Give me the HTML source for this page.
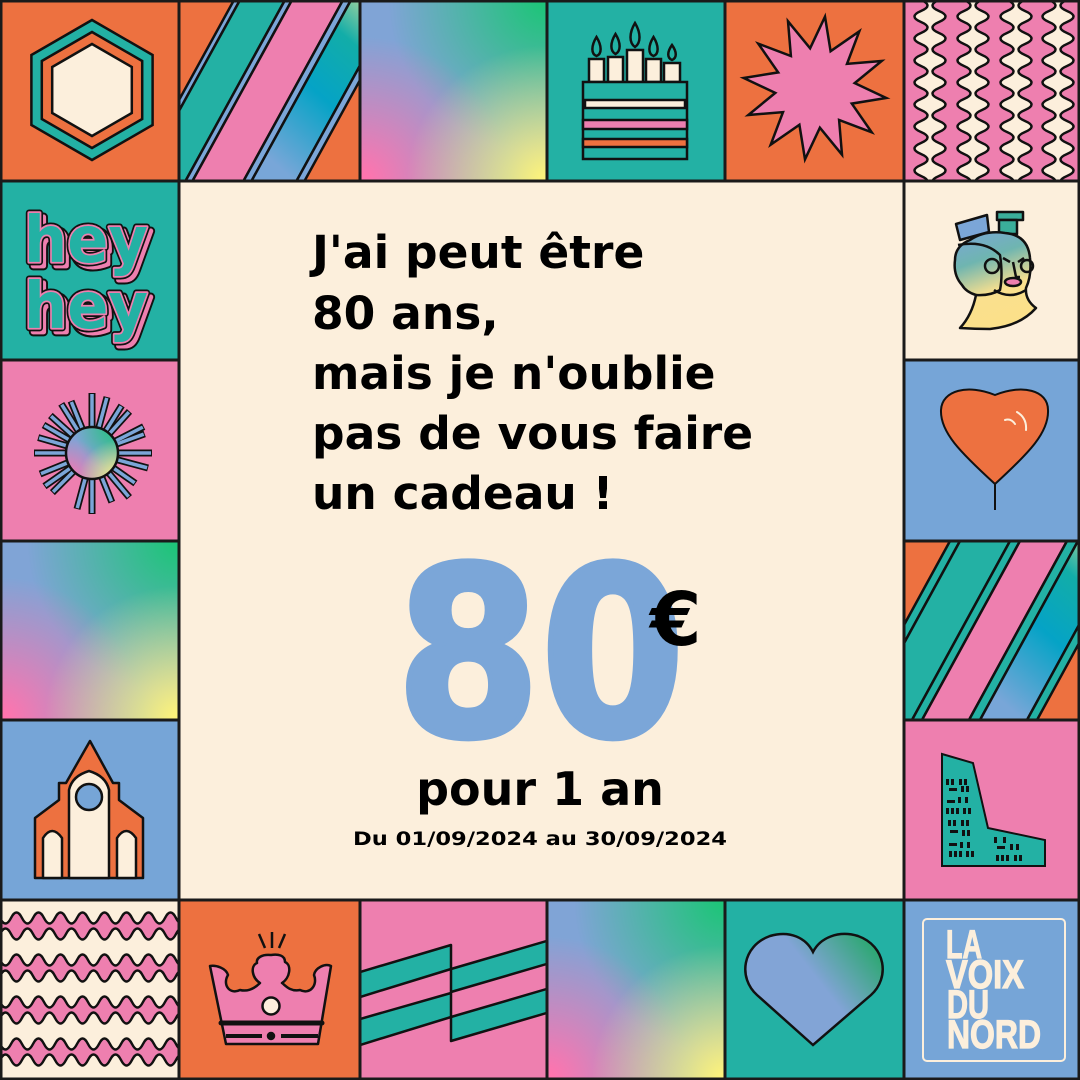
<!DOCTYPE html>
<html><head><meta charset="utf-8"><style>
html,body{margin:0;padding:0;background:#FCEFDC}
svg{display:block}
</style></head><body>
<svg width="1080" height="1080" viewBox="0 0 1080 1080" xmlns="http://www.w3.org/2000/svg">
<defs>
<radialGradient id="gG" cx="1" cy="0" r="0.85"><stop offset="0.05" stop-color="#1FC47A"/><stop offset="1" stop-color="#1FC47A" stop-opacity="0"/></radialGradient>
<radialGradient id="gP" cx="0" cy="1" r="0.8"><stop offset="0.05" stop-color="#FF74AE"/><stop offset="1" stop-color="#FF74AE" stop-opacity="0"/></radialGradient>
<radialGradient id="gY" cx="1" cy="1" r="0.75"><stop offset="0.05" stop-color="#FBF27C"/><stop offset="1" stop-color="#FBF27C" stop-opacity="0"/></radialGradient>
<linearGradient id="band" x1="1" y1="0" x2="0.3" y2="1"><stop offset="0" stop-color="#E8E49A"/><stop offset="0.3" stop-color="#12ADA8"/><stop offset="0.6" stop-color="#05A3C6"/><stop offset="1" stop-color="#78A6D8"/></linearGradient>
<linearGradient id="faceG" x1="0" y1="0" x2="0.3" y2="1"><stop offset="0" stop-color="#7BA6D8"/><stop offset="0.35" stop-color="#6FB5B0"/><stop offset="0.7" stop-color="#FAE08E"/><stop offset="1" stop-color="#FBE08A"/></linearGradient>
<linearGradient id="heartG" x1="0.2" y1="0.6" x2="1" y2="0.1"><stop offset="0.4" stop-color="#82A4D6"/><stop offset="1" stop-color="#22A866"/></linearGradient>
<clipPath id="c2"><rect x="179" y="0" width="181" height="181"/></clipPath>
<clipPath id="cR"><rect x="904" y="541" width="176" height="179"/></clipPath>
<clipPath id="cW"><rect x="904" y="0" width="176" height="181"/></clipPath>
<clipPath id="cB"><rect x="0" y="900" width="179" height="180"/></clipPath>
<clipPath id="cS"><rect x="360" y="900" width="187" height="180"/></clipPath>
</defs>

<rect x="0" y="0" width="1080" height="1080" fill="#FCEFDC"/>

<!-- tile 1 hexagon -->
<rect x="0" y="0" width="179" height="181" fill="#ED7140"/>
<polygon points="92,20 152.6,55 152.6,125 92,160 31.4,125 31.4,55" fill="#23B1A4" stroke="#111" stroke-width="2.5"/>
<polygon points="92,32 142.2,61 142.2,119 92,148 41.8,119 41.8,61" fill="#ED7140" stroke="#111" stroke-width="2.5"/>
<polygon points="92,44 131.8,67 131.8,113 92,136 52.2,113 52.2,67" fill="#FCEFDC" stroke="#111" stroke-width="2.5"/>

<!-- tile 2 stripes -->
<g clip-path="url(#c2)" stroke="#111" stroke-width="2.5">
<rect x="179" y="0" width="181" height="181" fill="#ED7140" stroke="none"/>
<polygon points="234,0 240,0 140.5,181 134.5,181" fill="#7BA6D8"/>
<polygon points="240,0 285,0 185.5,181 140.5,181" fill="#23B1A4"/>
<polygon points="285,0 292,0 192.5,181 185.5,181" fill="#7BA6D8"/>
<polygon points="292,0 343,0 243.5,181 192.5,181" fill="#EE7FAF"/>
<polygon points="343,0 351,0 251.5,181 243.5,181" fill="#7BA6D8"/>
<polygon points="351,0 396,0 296.5,181 251.5,181" fill="url(#band)"/>
<polygon points="396,0 404,0 304.5,181 296.5,181" fill="#7BA6D8"/>
</g>

<!-- tile 3 gradient -->
<g><rect x="360" y="0" width="187" height="181" fill="#80A4D6"/><rect x="360" y="0" width="187" height="181" fill="url(#gG)"/><rect x="360" y="0" width="187" height="181" fill="url(#gP)"/><rect x="360" y="0" width="187" height="181" fill="url(#gY)"/></g>

<!-- tile 4 cake -->
<rect x="547" y="0" width="178" height="181" fill="#23B1A4"/>
<g stroke="#111" stroke-width="2.5">
<rect x="589" y="59" width="15" height="23" fill="#FCEFDC"/>
<rect x="608" y="57" width="15" height="25" fill="#FCEFDC"/>
<rect x="627" y="50" width="16" height="32" fill="#FCEFDC"/>
<rect x="646" y="59" width="15" height="23" fill="#FCEFDC"/>
<rect x="664" y="63" width="16" height="19" fill="#FCEFDC"/>
<path d="M596.5,37 C602,46 602,54 596.5,56 C591,54 591,46 596.5,37Z" fill="#23B1A4"/>
<path d="M615.5,34 C621,43 621,51 615.5,54 C610,51 610,43 615.5,34Z" fill="#23B1A4"/>
<path d="M635,23 C641,33 641,43 635,47 C629,43 629,33 635,23Z" fill="#23B1A4"/>
<path d="M653.5,37 C659,46 659,54 653.5,56 C648,54 648,46 653.5,37Z" fill="#23B1A4"/>
<path d="M672,45 C677,52 677,58 672,60 C667,58 667,52 672,45Z" fill="#23B1A4"/>
<rect x="583" y="82" width="104" height="77" fill="#23B1A4"/>
<rect x="585" y="100" width="100" height="8" fill="#FCEFDC"/>
<rect x="583" y="120" width="104" height="9" fill="#EE7FAF"/>
<rect x="583" y="139" width="104" height="8" fill="#ED7140"/>
</g>

<!-- tile 5 star -->
<rect x="725" y="0" width="179" height="181" fill="#ED7140"/>
<polygon points="825,16.7 830.6,51.2 859.3,31.3 847,63.9 881.7,61 854.7,83.1 886.3,98 851.8,103.6 871.7,132.3 839.1,120 842,154.7 819.9,127.7 805,159.3 799.4,124.8 770.7,144.7 783,112.1 748.3,115 775.3,92.9 743.7,78 778.2,72.4 758.3,43.7 790.9,56 788,21.3 810.1,48.3" fill="#EE7FAF" stroke="#111" stroke-width="2.5" stroke-linejoin="miter"/>

<!-- tile 6 wavy vertical -->
<rect x="904" y="0" width="176" height="181" fill="#EE7FAF"/>
<g clip-path="url(#cW)" fill="#FCEFDC" stroke="#111" stroke-width="2.5">
<path d="M921,-11 q-13,5.5 0,11 t0,11 t0,11 t0,11 t0,11 t0,11 t0,11 t0,11 t0,11 t0,11 t0,11 t0,11 t0,11 t0,11 t0,11 t0,11 t0,11 t0,11 t0,11 L939,198 q13,-5.5 0,-11 t0,-11 t0,-11 t0,-11 t0,-11 t0,-11 t0,-11 t0,-11 t0,-11 t0,-11 t0,-11 t0,-11 t0,-11 t0,-11 t0,-11 t0,-11 t0,-11 t0,-11 t0,-11 Z"/>
<path d="M964,-11 q-13,5.5 0,11 t0,11 t0,11 t0,11 t0,11 t0,11 t0,11 t0,11 t0,11 t0,11 t0,11 t0,11 t0,11 t0,11 t0,11 t0,11 t0,11 t0,11 t0,11 L982,198 q13,-5.5 0,-11 t0,-11 t0,-11 t0,-11 t0,-11 t0,-11 t0,-11 t0,-11 t0,-11 t0,-11 t0,-11 t0,-11 t0,-11 t0,-11 t0,-11 t0,-11 t0,-11 t0,-11 t0,-11 Z"/>
<path d="M1007,-11 q-13,5.5 0,11 t0,11 t0,11 t0,11 t0,11 t0,11 t0,11 t0,11 t0,11 t0,11 t0,11 t0,11 t0,11 t0,11 t0,11 t0,11 t0,11 t0,11 t0,11 L1025,198 q13,-5.5 0,-11 t0,-11 t0,-11 t0,-11 t0,-11 t0,-11 t0,-11 t0,-11 t0,-11 t0,-11 t0,-11 t0,-11 t0,-11 t0,-11 t0,-11 t0,-11 t0,-11 t0,-11 t0,-11 Z"/>
<path d="M1049,-11 q-13,5.5 0,11 t0,11 t0,11 t0,11 t0,11 t0,11 t0,11 t0,11 t0,11 t0,11 t0,11 t0,11 t0,11 t0,11 t0,11 t0,11 t0,11 t0,11 t0,11 L1067,198 q13,-5.5 0,-11 t0,-11 t0,-11 t0,-11 t0,-11 t0,-11 t0,-11 t0,-11 t0,-11 t0,-11 t0,-11 t0,-11 t0,-11 t0,-11 t0,-11 t0,-11 t0,-11 t0,-11 t0,-11 Z"/>
</g>

<!-- hey hey -->
<rect x="0" y="181" width="179" height="179" fill="#23B1A4"/>
<g font-family="DejaVu Sans, sans-serif" font-weight="bold" font-size="64" stroke-linejoin="round">
<text x="28" y="266" fill="#EE7FAF" stroke="#111" stroke-width="9" textLength="124" lengthAdjust="spacingAndGlyphs">hey</text>
<text x="28" y="266" fill="#EE7FAF" stroke="#EE7FAF" stroke-width="5" textLength="124" lengthAdjust="spacingAndGlyphs">hey</text>
<text x="24" y="262" fill="#23B1A4" stroke="#111" stroke-width="7" textLength="124" lengthAdjust="spacingAndGlyphs">hey</text>
<text x="24" y="262" fill="#23B1A4" stroke="#EE7FAF" stroke-width="3.5" textLength="124" lengthAdjust="spacingAndGlyphs">hey</text>
<text x="24" y="262" fill="#23B1A4" textLength="124" lengthAdjust="spacingAndGlyphs">hey</text>
<text x="28" y="332" fill="#EE7FAF" stroke="#111" stroke-width="9" textLength="124" lengthAdjust="spacingAndGlyphs">hey</text>
<text x="28" y="332" fill="#EE7FAF" stroke="#EE7FAF" stroke-width="5" textLength="124" lengthAdjust="spacingAndGlyphs">hey</text>
<text x="24" y="328" fill="#23B1A4" stroke="#111" stroke-width="7" textLength="124" lengthAdjust="spacingAndGlyphs">hey</text>
<text x="24" y="328" fill="#23B1A4" stroke="#EE7FAF" stroke-width="3.5" textLength="124" lengthAdjust="spacingAndGlyphs">hey</text>
<text x="24" y="328" fill="#23B1A4" textLength="124" lengthAdjust="spacingAndGlyphs">hey</text>
</g>

<!-- sunburst -->
<rect x="0" y="360" width="179" height="181" fill="#EE7FAF"/>
<g stroke-linecap="butt">
<g stroke="#111" stroke-width="7">
<line x1="118" y1="453" x2="152" y2="453"/><line x1="118" y1="453" x2="150" y2="453" transform="rotate(15 92 453)"/><line x1="118" y1="453" x2="145" y2="453" transform="rotate(35 92 453)"/><line x1="118" y1="453" x2="150" y2="453" transform="rotate(50 92 453)"/><line x1="118" y1="453" x2="145" y2="453" transform="rotate(68 92 453)"/><line x1="118" y1="453" x2="153" y2="453" transform="rotate(90 92 453)"/><line x1="118" y1="453" x2="150" y2="453" transform="rotate(105 92 453)"/><line x1="118" y1="453" x2="148" y2="453" transform="rotate(135 92 453)"/><line x1="118" y1="453" x2="150" y2="453" transform="rotate(145 92 453)"/><line x1="118" y1="453" x2="148" y2="453" transform="rotate(158 92 453)"/><line x1="118" y1="453" x2="150" y2="453" transform="rotate(180 92 453)"/><line x1="118" y1="453" x2="148" y2="453" transform="rotate(196 92 453)"/><line x1="118" y1="453" x2="148" y2="453" transform="rotate(210 92 453)"/><line x1="118" y1="453" x2="148" y2="453" transform="rotate(222 92 453)"/><line x1="118" y1="453" x2="150" y2="453" transform="rotate(238 92 453)"/><line x1="118" y1="453" x2="148" y2="453" transform="rotate(248 92 453)"/><line x1="118" y1="453" x2="152" y2="453" transform="rotate(270 92 453)"/><line x1="118" y1="453" x2="150" y2="453" transform="rotate(285 92 453)"/><line x1="118" y1="453" x2="148" y2="453" transform="rotate(302 92 453)"/><line x1="118" y1="453" x2="148" y2="453" transform="rotate(312 92 453)"/><line x1="118" y1="453" x2="150" y2="453" transform="rotate(333 92 453)"/><line x1="118" y1="453" x2="148" y2="453" transform="rotate(340 92 453)"/>
</g>
<g stroke="#7BA6D8" stroke-width="3.5">
<line x1="118" y1="453" x2="151" y2="453"/><line x1="118" y1="453" x2="149" y2="453" transform="rotate(15 92 453)"/><line x1="118" y1="453" x2="144" y2="453" transform="rotate(35 92 453)"/><line x1="118" y1="453" x2="149" y2="453" transform="rotate(50 92 453)"/><line x1="118" y1="453" x2="144" y2="453" transform="rotate(68 92 453)"/><line x1="118" y1="453" x2="152" y2="453" transform="rotate(90 92 453)"/><line x1="118" y1="453" x2="149" y2="453" transform="rotate(105 92 453)"/><line x1="118" y1="453" x2="147" y2="453" transform="rotate(135 92 453)"/><line x1="118" y1="453" x2="149" y2="453" transform="rotate(145 92 453)"/><line x1="118" y1="453" x2="147" y2="453" transform="rotate(158 92 453)"/><line x1="118" y1="453" x2="149" y2="453" transform="rotate(180 92 453)"/><line x1="118" y1="453" x2="147" y2="453" transform="rotate(196 92 453)"/><line x1="118" y1="453" x2="147" y2="453" transform="rotate(210 92 453)"/><line x1="118" y1="453" x2="147" y2="453" transform="rotate(222 92 453)"/><line x1="118" y1="453" x2="149" y2="453" transform="rotate(238 92 453)"/><line x1="118" y1="453" x2="147" y2="453" transform="rotate(248 92 453)"/><line x1="118" y1="453" x2="151" y2="453" transform="rotate(270 92 453)"/><line x1="118" y1="453" x2="149" y2="453" transform="rotate(285 92 453)"/><line x1="118" y1="453" x2="147" y2="453" transform="rotate(302 92 453)"/><line x1="118" y1="453" x2="147" y2="453" transform="rotate(312 92 453)"/><line x1="118" y1="453" x2="149" y2="453" transform="rotate(333 92 453)"/><line x1="118" y1="453" x2="147" y2="453" transform="rotate(340 92 453)"/>
</g>
</g>
<circle cx="92" cy="453" r="26" fill="#80A4D6"/>
<circle cx="92" cy="453" r="26" fill="url(#gG)"/><circle cx="92" cy="453" r="26" fill="url(#gP)"/><circle cx="92" cy="453" r="26" fill="url(#gY)"/>
<circle cx="92" cy="453" r="26" fill="none" stroke="#111" stroke-width="2.5"/>

<!-- left gradient -->
<g><rect x="0" y="541" width="179" height="179" fill="#80A4D6"/><rect x="0" y="541" width="179" height="179" fill="url(#gG)"/><rect x="0" y="541" width="179" height="179" fill="url(#gP)"/><rect x="0" y="541" width="179" height="179" fill="url(#gY)"/></g>

<!-- church -->
<rect x="0" y="720" width="179" height="180" fill="#76A5D7"/>
<g stroke="#111" stroke-width="2.5" stroke-linejoin="round">
<path d="M90,741 L113,783 L119,783 L119,800 L143,818 L143,878 L35,878 L35,818 L59,800 L59,783 L66,783 Z" fill="#ED7140"/>
<path d="M69,878 L69,790 Q72,776 89,771 Q106,776 109,790 L109,878 Z" fill="#FCEFDC"/>
<path d="M43,878 L43,838 Q52,824 62,838 L62,878 Z" fill="#FCEFDC"/>
<path d="M117,878 L117,838 Q126,824 136,838 L136,878 Z" fill="#FCEFDC"/>
<circle cx="89" cy="797" r="13" fill="#76A5D7"/>
</g>

<!-- wavy horizontal -->
<rect x="0" y="900" width="179" height="180" fill="#FCEFDC"/>
<g clip-path="url(#cB)" fill="#EE7FAF" stroke="#111" stroke-width="2.5">
<path d="M-11,918 q5.5,-11 11,0 t11,0 t11,0 t11,0 t11,0 t11,0 t11,0 t11,0 t11,0 t11,0 t11,0 t11,0 t11,0 t11,0 t11,0 t11,0 t11,0 t11,0 L187,934 q-5.5,-11 -11,0 t-11,0 t-11,0 t-11,0 t-11,0 t-11,0 t-11,0 t-11,0 t-11,0 t-11,0 t-11,0 t-11,0 t-11,0 t-11,0 t-11,0 t-11,0 t-11,0 t-11,0 Z"/>
<path d="M-11,960 q5.5,-11 11,0 t11,0 t11,0 t11,0 t11,0 t11,0 t11,0 t11,0 t11,0 t11,0 t11,0 t11,0 t11,0 t11,0 t11,0 t11,0 t11,0 t11,0 L187,976 q-5.5,-11 -11,0 t-11,0 t-11,0 t-11,0 t-11,0 t-11,0 t-11,0 t-11,0 t-11,0 t-11,0 t-11,0 t-11,0 t-11,0 t-11,0 t-11,0 t-11,0 t-11,0 t-11,0 Z"/>
<path d="M-11,1002 q5.5,-11 11,0 t11,0 t11,0 t11,0 t11,0 t11,0 t11,0 t11,0 t11,0 t11,0 t11,0 t11,0 t11,0 t11,0 t11,0 t11,0 t11,0 t11,0 L187,1018 q-5.5,-11 -11,0 t-11,0 t-11,0 t-11,0 t-11,0 t-11,0 t-11,0 t-11,0 t-11,0 t-11,0 t-11,0 t-11,0 t-11,0 t-11,0 t-11,0 t-11,0 t-11,0 t-11,0 Z"/>
<path d="M-11,1044 q5.5,-11 11,0 t11,0 t11,0 t11,0 t11,0 t11,0 t11,0 t11,0 t11,0 t11,0 t11,0 t11,0 t11,0 t11,0 t11,0 t11,0 t11,0 t11,0 L187,1060 q-5.5,-11 -11,0 t-11,0 t-11,0 t-11,0 t-11,0 t-11,0 t-11,0 t-11,0 t-11,0 t-11,0 t-11,0 t-11,0 t-11,0 t-11,0 t-11,0 t-11,0 t-11,0 t-11,0 Z"/>
</g>

<!-- crown -->
<rect x="179" y="900" width="181" height="180" fill="#ED7140"/>
<g stroke="#111" stroke-width="2.5" stroke-linejoin="round">
<path d="M210,966 L226,1044 L318,1044 L331,966 C325,963 315,968 314,975 C318,985 310,995 300,990 C290,992 285,985 282,983 C290,978 292,965 285,962 C285,955 278,954 271,955 C262,954 256,958 257,963 C250,966 252,978 260,983 C255,988 248,992 240,990 C230,995 222,985 228,975 C226,968 216,965 210,966 Z" fill="#EE7FAF"/>
<circle cx="271" cy="1006" r="8.5" fill="#FCEFDC"/>
<line x1="221" y1="1023" x2="322" y2="1023" stroke-width="5" stroke-linecap="round"/>
<line x1="226" y1="1036" x2="262" y2="1036" stroke-width="4"/>
<line x1="281" y1="1036" x2="318" y2="1036" stroke-width="4"/>
<circle cx="271" cy="1036" r="3" fill="#111"/>
<line x1="259" y1="934" x2="265" y2="948"/><line x1="272" y1="932" x2="272" y2="948"/><line x1="285" y1="934" x2="279" y2="948"/>
</g>

<!-- pink stripes bottom -->
<rect x="360" y="900" width="187" height="180" fill="#EE7FAF"/>
<g clip-path="url(#cS)" fill="#23B1A4" stroke="#111" stroke-width="2.5" stroke-linejoin="round">
<polygon points="360,972 451,945 451,969 360,997"/>
<polygon points="360,1019 451,993 451,1017 360,1045"/>
<polygon points="451,969 550,940 550,963 451,992"/>
<polygon points="451,1017 550,988 550,1012 451,1041"/>
</g>

<!-- bottom gradient -->
<g><rect x="547" y="900" width="178" height="180" fill="#80A4D6"/><rect x="547" y="900" width="178" height="180" fill="url(#gG)"/><rect x="547" y="900" width="178" height="180" fill="url(#gP)"/><rect x="547" y="900" width="178" height="180" fill="url(#gY)"/></g>

<!-- teal heart -->
<rect x="725" y="900" width="179" height="180" fill="#23B1A4"/>
<path d="M813,1045 L757,995 C738,978 742,946 770,936 C790,930 806,938 813,952 C820,938 838,930 858,936 C886,946 890,978 871,995 Z" fill="url(#heartG)" stroke="#111" stroke-width="2.5"/>

<!-- logo -->
<rect x="904" y="900" width="176" height="180" fill="#76A5D7"/>
<rect x="923" y="919" width="142" height="142" rx="4" fill="none" stroke="#FCEFDC" stroke-width="2"/>
<g font-family="Liberation Sans, sans-serif" font-weight="bold" font-size="40" fill="#FCEFDC" stroke="#FCEFDC" stroke-width="1.2">
<text x="946" y="958" textLength="36" lengthAdjust="spacingAndGlyphs">LA</text>
<text x="946" y="988" textLength="78" lengthAdjust="spacingAndGlyphs">VOIX</text>
<text x="947" y="1018" textLength="42" lengthAdjust="spacingAndGlyphs">DU</text>
<text x="947" y="1048" textLength="94" lengthAdjust="spacingAndGlyphs">NORD</text>
</g>

<!-- face -->
<rect x="904" y="181" width="176" height="179" fill="#FCEFDC"/>
<g stroke="#111" stroke-width="2.5" stroke-linejoin="round">
<path d="M956,224 L987,215 L989,232 L960,240 Z" fill="#7BA6D8"/>
<rect x="997" y="212" width="26" height="8" fill="#3AAE9A"/>
<rect x="999" y="220" width="18" height="14" fill="#3AAE9A"/>
<path d="M970,240 Q985,230 1005,233 Q1028,235 1030,258 Q1032,275 1026,288 Q1025,300 1036,308 Q1020,326 990,329 Q975,329 960,328 Q972,315 976,295 Q966,292 962,285 Q953,275 955,260 Q955,246 970,240 Z" fill="url(#faceG)"/>
<path d="M958,245 Q985,240 1000,255 Q1003,275 1000,290 Q990,296 976,295" fill="none"/>
<circle cx="992" cy="266" r="7" fill="none"/>
<circle cx="1027" cy="266" r="6" fill="none"/>
<path d="M1003,258 L1010,262 M1018,262 L1024,258 M1013,262 L1016,277 L1020,277" fill="none"/>
<ellipse cx="1013" cy="282" rx="8" ry="4" fill="#EE7FAF"/>
<path d="M994,290 Q1010,300 1026,290" fill="none"/>
</g>

<!-- balloon -->
<rect x="904" y="360" width="176" height="181" fill="#76A5D7"/>
<path d="M995,484 C960,452 940,432 941,410 C942,390 968,384 995,395 C1022,384 1048,390 1048,410 C1049,432 1030,452 995,484 Z" fill="#ED7140" stroke="#111" stroke-width="2"/>
<line x1="995" y1="484" x2="995" y2="510" stroke="#111" stroke-width="2"/>
<path d="M1005,420 Q1011,418 1015,424 M1017,412 Q1027,418 1026,430" fill="none" stroke="#FCEFDC" stroke-width="2" stroke-linecap="round"/>

<!-- right stripes -->
<g clip-path="url(#cR)" stroke="#111" stroke-width="2.5">
<rect x="904" y="541" width="176" height="179" fill="#ED7140" stroke="none"/>
<polygon points="950,541 960,541 862,720 852,720" fill="#23B1A4"/>
<polygon points="960,541 1010,541 912,720 862,720" fill="#23B1A4"/>
<polygon points="1010,541 1020,541 922,720 912,720" fill="#23B1A4"/>
<polygon points="1020,541 1067,541 969,720 922,720" fill="#EE7FAF"/>
<polygon points="1067,541 1078,541 980,720 969,720" fill="#23B1A4"/>
<polygon points="1078,541 1125,541 1027,720 980,720" fill="url(#band)"/>
<polygon points="1125,541 1135,541 1037,720 1027,720" fill="#23B1A4"/>
</g>

<!-- building -->
<rect x="904" y="720" width="176" height="180" fill="#EE7FAF"/>
<polygon points="942,754 973,763 988,828 1045,840 1045,866 942,866" fill="#23B1A4" stroke="#111" stroke-width="2"/>
<g fill="#111">
<rect x="946" y="779" width="3" height="6"/><rect x="951" y="779" width="3" height="6"/><rect x="959" y="779" width="3" height="6"/><rect x="964" y="779" width="3" height="6"/>
<rect x="949" y="788" width="8" height="3"/><rect x="961" y="786" width="3" height="6"/><rect x="966" y="786" width="3" height="6"/>
<rect x="947" y="800" width="8" height="3"/><rect x="958" y="797" width="3" height="6"/><rect x="965" y="797" width="3" height="6"/>
<rect x="946" y="808" width="3" height="6"/><rect x="951" y="808" width="3" height="6"/><rect x="956" y="808" width="3" height="6"/><rect x="963" y="808" width="3" height="6"/><rect x="968" y="808" width="3" height="6"/>
<rect x="948" y="820" width="3" height="6"/><rect x="953" y="820" width="3" height="6"/><rect x="961" y="820" width="3" height="6"/><rect x="966" y="820" width="3" height="6"/>
<rect x="950" y="830" width="8" height="3"/><rect x="962" y="830" width="3" height="6"/><rect x="967" y="830" width="3" height="6"/>
<rect x="949" y="843" width="8" height="3"/><rect x="960" y="842" width="3" height="6"/><rect x="967" y="842" width="3" height="6"/>
<rect x="949" y="851" width="3" height="6"/><rect x="954" y="851" width="3" height="6"/><rect x="959" y="851" width="3" height="6"/><rect x="966" y="851" width="3" height="6"/><rect x="971" y="851" width="3" height="6"/>
<rect x="994" y="837" width="3" height="6"/><rect x="1003" y="837" width="3" height="6"/>
<rect x="997" y="846" width="8" height="3"/><rect x="1010" y="844" width="3" height="6"/><rect x="1016" y="844" width="3" height="6"/>
<rect x="996" y="855" width="3" height="6"/><rect x="1001" y="855" width="3" height="6"/><rect x="1006" y="855" width="3" height="6"/><rect x="1014" y="855" width="3" height="6"/><rect x="1019" y="855" width="3" height="6"/>
</g>

<!-- grid lines -->
<g fill="none" stroke="#1a1a1a" stroke-width="3">
<line x1="0" y1="181" x2="1080" y2="181"/>
<line x1="0" y1="900" x2="1080" y2="900"/>
<line x1="0" y1="360" x2="179" y2="360"/><line x1="0" y1="541" x2="179" y2="541"/><line x1="0" y1="720" x2="179" y2="720"/>
<line x1="904" y1="360" x2="1080" y2="360"/><line x1="904" y1="541" x2="1080" y2="541"/><line x1="904" y1="720" x2="1080" y2="720"/>
<line x1="179" y1="0" x2="179" y2="1080"/><line x1="904" y1="0" x2="904" y2="1080"/>
<line x1="360" y1="0" x2="360" y2="181"/><line x1="547" y1="0" x2="547" y2="181"/><line x1="725" y1="0" x2="725" y2="181"/>
<line x1="360" y1="900" x2="360" y2="1080"/><line x1="547" y1="900" x2="547" y2="1080"/><line x1="725" y1="900" x2="725" y2="1080"/>
<rect x="1" y="1" width="1078" height="1078"/>
</g>

<!-- center text -->
<g font-family="DejaVu Sans, sans-serif" font-weight="bold" fill="#000">
<g font-size="45.5">
<text x="312" y="268">J'ai peut être</text>
<text x="312" y="329">80 ans,</text>
<text x="312" y="389">mais je n'oublie</text>
<text x="312" y="449">pas de vous faire</text>
<text x="312" y="509">un cadeau !</text>
</g>
<text x="396" y="735" font-size="234" fill="#7BA6D8" stroke="#7BA6D8" stroke-width="6" textLength="289" lengthAdjust="spacingAndGlyphs">80</text>
<text x="650" y="645" font-size="74">€</text>
<text x="540" y="805" font-size="46" text-anchor="middle">pour 1 an</text>
<text x="353" y="845" font-size="19" textLength="374" lengthAdjust="spacingAndGlyphs">Du 01/09/2024 au 30/09/2024</text>
</g>
</svg>
</body></html>
